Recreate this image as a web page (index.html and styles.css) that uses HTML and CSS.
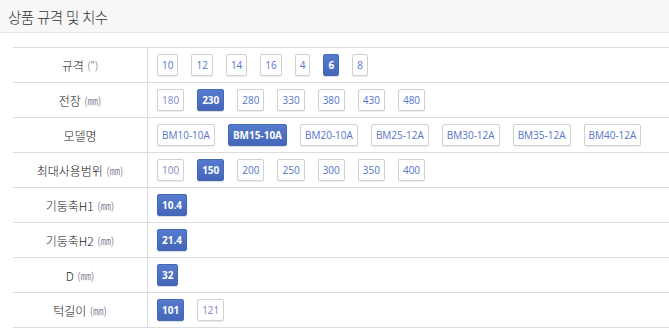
FILE: index.html
```html
<!DOCTYPE html>
<html lang="ko">
<head>
<meta charset="utf-8">
<title>상품 규격 및 치수</title>
<link rel="stylesheet" href="styles.css">
</head>
<body>
<div class="panel">
  <div class="panel-head"><h2 class="panel-title">상품 규격 및 치수</h2></div>
  <div class="spec">
    <div class="spec-row">
      <div class="spec-label">규격 <span class="unit">(")</span></div>
      <div class="spec-opts">
        <span class="opt">10</span><span class="opt">12</span><span class="opt">14</span><span class="opt">16</span><span class="opt">4</span><span class="opt on">6</span><span class="opt">8</span>
      </div>
    </div>
    <div class="spec-row">
      <div class="spec-label">전장 <span class="unit">(㎜)</span></div>
      <div class="spec-opts">
        <span class="opt dim">180</span><span class="opt on">230</span><span class="opt">280</span><span class="opt">330</span><span class="opt">380</span><span class="opt">430</span><span class="opt">480</span>
      </div>
    </div>
    <div class="spec-row">
      <div class="spec-label">모델명</div>
      <div class="spec-opts">
        <span class="opt">BM10-10A</span><span class="opt on">BM15-10A</span><span class="opt">BM20-10A</span><span class="opt">BM25-12A</span><span class="opt">BM30-12A</span><span class="opt">BM35-12A</span><span class="opt">BM40-12A</span>
      </div>
    </div>
    <div class="spec-row">
      <div class="spec-label">최대사용범위 <span class="unit">(㎜)</span></div>
      <div class="spec-opts">
        <span class="opt dim">100</span><span class="opt on">150</span><span class="opt">200</span><span class="opt">250</span><span class="opt">300</span><span class="opt">350</span><span class="opt">400</span>
      </div>
    </div>
    <div class="spec-row">
      <div class="spec-label">기둥축H1 <span class="unit">(㎜)</span></div>
      <div class="spec-opts"><span class="opt on">10.4</span></div>
    </div>
    <div class="spec-row">
      <div class="spec-label">기둥축H2 <span class="unit">(㎜)</span></div>
      <div class="spec-opts"><span class="opt on">21.4</span></div>
    </div>
    <div class="spec-row">
      <div class="spec-label">D <span class="unit">(㎜)</span></div>
      <div class="spec-opts"><span class="opt on">32</span></div>
    </div>
    <div class="spec-row">
      <div class="spec-label">턱길이 <span class="unit">(㎜)</span></div>
      <div class="spec-opts"><span class="opt on">101</span><span class="opt dim">121</span></div>
    </div>
  </div>
</div>
</body>
</html>
```
FILE: styles.css
```css
html, body {
  margin: 0;
  padding: 0;
  background: #fff;
}
body {
  font-family: "Open Sans", "Noto Sans CJK KR", sans-serif;
  color: #333;
  overflow: hidden;
}
.panel-head {
  height: 32px;
  background: #f7f7f7;
  border-bottom: 1px solid #e6e6e6;
  display: flex;
  align-items: center;
  padding-left: 8px;
}
.panel-title {
  margin: 0;
  font-family: "Noto Sans CJK KR", sans-serif;
  font-weight: 300;
  font-size: 14.5px;
  color: #333;
  letter-spacing: -0.6px;
}
.spec {
  margin: 14px 0 0 13px;
  border-top: 1px solid #dcdcdc;
}
.spec-row {
  display: grid;
  grid-template-columns: 135px 1fr;
  height: 34px;
  border-bottom: 1px solid #dcdcdc;
}
.spec-label {
  border-right: 1px solid #dcdcdc;
  display: flex;
  align-items: center;
  justify-content: center;
  font-family: "Noto Sans CJK KR", sans-serif;
  font-weight: 300;
  font-size: 12px;
  color: #222;
  white-space: pre;
}
.unit {
  font-size: 10.5px;
  color: #5a5070;
}
.spec-opts {
  display: flex;
  align-items: center;
  gap: 13px;
  padding-left: 9px;
}
.opt {
  display: inline-flex;
  align-items: center;
  height: 20px;
  padding: 0 4px;
  border: 1px solid #d0d0d0;
  border-radius: 2px;
  box-shadow: 0 1px 1px rgba(0,0,0,0.08);
  background: #fff;
  font-size: 10px;
  color: #5674c8;
}
.opt.dim {
  color: #7f88c6;
}
.opt.on {
  background: linear-gradient(#567bcd, #4466b9);
  border-color: #4567b8;
  color: #fff;
  font-weight: 700;
  box-shadow: 0 1px 1px rgba(0,0,0,0.15);
}
```
